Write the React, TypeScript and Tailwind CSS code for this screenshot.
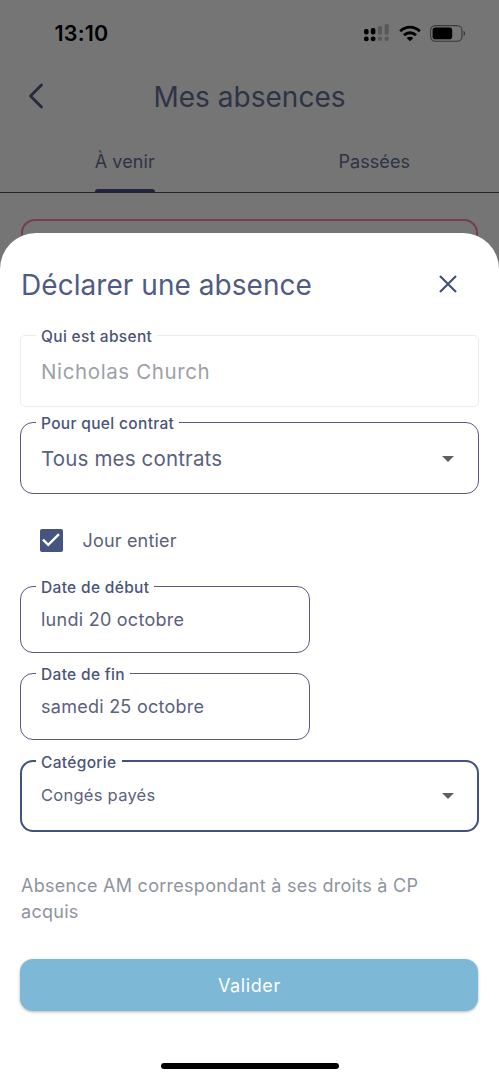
import { ReactNode } from "react";
import clsx from "clsx";

interface FieldProps {
  label: string;
  className?: string;
  children: ReactNode;
}

const Field = ({ label, className, children }: FieldProps) => (
  <fieldset className={clsx("flex min-w-0 flex-col", className)}>
    <legend className="h-[18px] px-[5px] text-[15.5px] leading-[22px] font-medium tracking-[0.33px] text-[#4b5478]">
      {label}
    </legend>
    {children}
  </fieldset>
);

const Caret = ({ className }: { className: string }) => (
  <svg width="12" height="6" viewBox="0 0 12 6" className={className} fill="#5f5f5f">
    <path d="M0 0h12L6 6z" />
  </svg>
);

const StatusBar = () => (
  <div className="flex h-[66px] items-center justify-between pr-[33px] pl-[54px] text-black">
    <span className="pl-[0.5px] text-[21.5px] leading-6 font-semibold tracking-[0.2px]">13:10</span>
    <div className="flex items-center">
      <svg width="26" height="18" viewBox="0 0 26 18">
        <rect x="0" y="5" width="4.6" height="5.6" rx="2" />
        <rect x="0" y="12.4" width="4.6" height="4.8" rx="2" />
        <rect x="6.8" y="4" width="4.6" height="6.6" rx="2" />
        <rect x="6.8" y="12.4" width="4.6" height="4.8" rx="2" />
        <g fill="#595959">
          <rect x="13.8" y="2" width="4.2" height="8.6" rx="1.6" />
          <rect x="13.8" y="12.6" width="4.2" height="4.4" rx="2" />
          <rect x="20.6" y="0" width="4.2" height="10.6" rx="1.6" />
          <rect x="20.6" y="12.6" width="4.2" height="4.4" rx="2" />
        </g>
      </svg>
      <svg width="22" height="17" viewBox="0 0 22 17" className="ml-[9px]" fill="none" stroke="#000" strokeWidth="2.9">
        <path d="M1.2 6.2C6.8 .7 15.2.7 20.8 6.2" />
        <path d="M5 10.2c3.5-3.3 8.5-3.3 12 0" />
        <path d="M7.6 12.9c2-1.7 4.8-1.7 6.8 0L11 16.3z" fill="#000" stroke="none" />
      </svg>
      <svg width="36" height="17" viewBox="0 0 36 17" className="ml-[9px]">
        <rect x=".6" y=".6" width="31.4" height="15.6" rx="4.6" fill="none" stroke="#3a3a3a" strokeWidth="1.1" />
        <rect x="2.6" y="2.6" width="19.6" height="11.6" rx="2.8" />
        <path d="M33.6 5.8c2 .7 2 4.5 0 5.2z" fill="#3a3a3a" />
      </svg>
    </div>
  </div>
);

const App = () => {
  return (
    <div className="relative flex h-[1080px] w-[499px] flex-col overflow-hidden bg-[#757575] font-['Inter',sans-serif]">
      <StatusBar />

      {/* Page behind the sheet */}
      <header className="grid h-[62px] grid-cols-[72px_1fr_72px] items-center">
        <svg width="16" height="26" viewBox="0 0 16 26" className="mb-[2px] ml-7" fill="none" stroke="#252b3d" strokeWidth="2.8" strokeLinecap="round" strokeLinejoin="round">
          <path d="M13.5 2 2.5 13l11 11" />
        </svg>
        <h1 className="text-center text-[28px] leading-9 tracking-[0.03px] text-[#2e3345]">Mes absences</h1>
      </header>
      <nav className="flex h-[65px] shrink-0 border-b border-[#25272f] text-[18px] leading-6 tracking-[0.08px] text-[#2e3345]">
        <div className="flex flex-1 flex-col items-center justify-between pt-[22px]">
          <span>À venir</span>
          <span className="h-[3px] w-[60px] rounded-t-[3px] bg-[#1f2540]" />
        </div>
        <div className="flex flex-1 justify-center pt-[22px]">Passées</div>
      </nav>
      <div className="mx-[21px] mt-[26px] h-40 shrink-0 rounded-[14px] border-2 border-[#743f4b]" />

      <section className="absolute inset-x-0 top-[233px] bottom-0 flex flex-col rounded-t-[36px] bg-white px-5 text-[#5a617c]">
        <div className="flex h-[93px] items-center justify-between pt-[9px] pr-[22px] pl-[1px]">
          <h2 className="pt-px text-[28px] leading-9 tracking-[0.05px] text-[#505b84]">Déclarer une absence</h2>
          <svg width="18" height="18" viewBox="0 0 18 18" stroke="#43517a" strokeWidth="2.2">
            <path d="m1 1 16 16M17 1 1 17" />
          </svg>
        </div>

        <Field label="Qui est absent" className="h-[81px] rounded-[5px] border border-[#ececee] pl-[15px]">
          <p className="pt-[14px] pl-[5px] text-[20.5px] leading-7 tracking-[0.62px] text-[#9ca1a8]">Nicholas Church</p>
        </Field>

        <Field label="Pour quel contrat" className="mt-[6px] h-[81px] rounded-[13px] border border-[#575980] pl-[15px]">
          <div className="flex items-center justify-between pt-[14px] pl-[5px]">
            <span className="text-[20.5px] leading-7 tracking-[0.16px]">Tous mes contrats</span>
            <Caret className="mr-6" />
          </div>
        </Field>

        <label className="mt-[34px] flex h-6 items-center gap-5 pl-[19.5px]">
          <span className="flex size-[23px] items-center justify-center rounded-[2px] bg-[#46557f]">
            <svg width="18" height="14" viewBox="0 0 18 14" fill="none" stroke="#fff" strokeWidth="2.4">
              <path d="m1 6.6 5.2 5.2L17 1.2" />
            </svg>
          </span>
          <span className="text-[18px] tracking-[0.18px]">Jour entier</span>
        </label>

        <Field label="Date de début" className="mt-[25px] h-[76px] w-[290px] rounded-[13px] border border-[#575980] pl-[15px]">
          <p className="pt-[13px] pl-[5px] text-[18px] leading-6 tracking-[0.26px]">lundi 20 octobre</p>
        </Field>
        <Field label="Date de fin" className="mt-[11px] h-[76px] w-[290px] rounded-[13px] border border-[#575980] pl-[15px]">
          <p className="pt-[13px] pl-[5px] text-[18px] leading-6 tracking-[0.26px]">samedi 25 octobre</p>
        </Field>

        <Field label="Catégorie" className="mt-[12px] h-[80px] rounded-[13px] border-2 border-[#43527a] pl-[14px]">
          <div className="flex items-center justify-between pt-[13px] pl-[5px]">
            <span className="text-[16.5px] leading-6 tracking-[0.26px]">Congés payés</span>
            <Caret className="mt-[2px] mr-[23px]" />
          </div>
        </Field>

        <p className="mt-[41px] pl-[1px] text-[18px] leading-[26px] tracking-[0.27px] text-[#8f949e]">
          Absence AM correspondant à ses droits à CP acquis
        </p>

        <button className="mt-[34px] mr-[0.6px] ml-[0.4px] h-[52px] rounded-[13px] bg-[#7db8d7] text-[18px] tracking-[0.6px] text-white shadow-[0_1px_3px_rgba(0,0,0,0.3)]">
          Valider
        </button>

        {/* Home indicator */}
        <div className="mx-auto mt-[52px] h-[6px] w-[178px] rounded-full bg-black" />
      </section>
    </div>
  );
};

export default App;
